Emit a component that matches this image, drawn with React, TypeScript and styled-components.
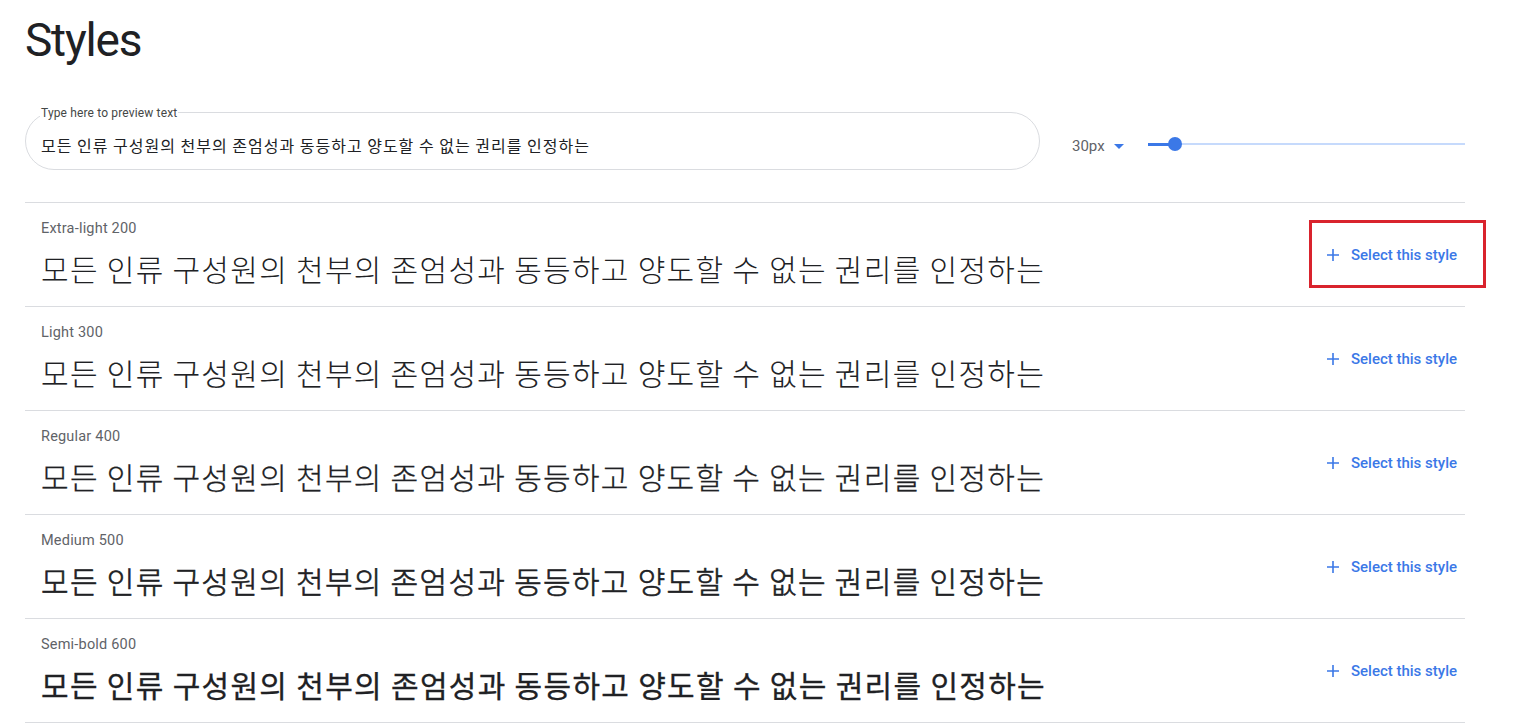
import React from 'react'
import styled, { createGlobalStyle } from 'styled-components';

const sample = '모든 인류 구성원의 천부의 존엄성과 동등하고 양도할 수 없는 권리를 인정하는';

// the installed CJK face is heavier than the reference serif, so each style gets its own weight and stroke
const styles = [
    { name: 'Extra-light 200', weight: 300, stroke: 0 },
    { name: 'Light 300', weight: 300, stroke: 0.15 },
    { name: 'Regular 400', weight: 300, stroke: 0.3 },
    { name: 'Medium 500', weight: 300, stroke: 0.6 },
    { name: 'Semi-bold 600', weight: 400, stroke: 0.3 },
];

export default function App() {
    return (
        <>
            <GlobalStyle />
            <Page>
                <Title>Styles</Title>
                <Toolbar>
                    <PreviewField>
                        <FieldLabel>Type here to preview text</FieldLabel>
                        <PreviewInput defaultValue={sample} />
                    </PreviewField>
                    <SizeSelect>
                        30px
                        <svg width="10" height="5" viewBox="0 0 10 5"><path d="M0 0h10L5 5z" fill="#3b78e7" /></svg>
                    </SizeSelect>
                    <Slider>
                        <SliderActive />
                        <SliderThumb />
                    </Slider>
                </Toolbar>
                <StyleList>
                    {styles.map((style, i) => (
                        <StyleRow key={style.name}>
                            <StyleText>
                                <StyleName>{style.name}</StyleName>
                                <Sample weight={style.weight} stroke={style.stroke}>{sample}</Sample>
                            </StyleText>
                            <SelectButton>
                                <svg width="12" height="12" viewBox="0 0 12 12">
                                    <path d="M6 0v12M0 6h12" stroke="#3b78e7" strokeWidth="1.6" />
                                </svg>
                                Select this style
                                {i === 0 && <Highlight />}
                            </SelectButton>
                        </StyleRow>
                    ))}
                </StyleList>
            </Page>
        </>
    )
}

const GlobalStyle = createGlobalStyle`
    body {
        margin: 0;
        background: #fff;
        font-family: Roboto, "Noto Sans CJK KR", sans-serif;
    }
`;

const Page = styled('div')(() => {
    return {
        padding: '14px 56px 0 25px',
    }
});

const Title = styled('h1')(() => {
    return {
        margin: 0,
        fontFamily: 'Roboto, sans-serif',
        fontWeight: 400,
        fontSize: 46,
        lineHeight: '52px',
        letterSpacing: -1.2,
        color: '#202124',
    }
});

const Toolbar = styled('div')(() => {
    return {
        display: 'flex',
        alignItems: 'center',
        marginTop: 46,
        paddingBottom: 32,
        borderBottom: '1px solid #dadce0',
    }
});

const PreviewField = styled('div')(() => {
    return {
        position: 'relative',
        width: 1015,
        height: 58,
        boxSizing: 'border-box',
        border: '1px solid #dadce0',
        borderRadius: 29,
        display: 'flex',
        alignItems: 'center',
        padding: '8px 16px 0 15px',
    }
});

const FieldLabel = styled('span')(() => {
    return {
        position: 'absolute',
        left: 14,
        top: -7,
        padding: '0 1px',
        background: '#fff',
        fontFamily: 'Roboto, sans-serif',
        fontSize: 12,
        lineHeight: '14px',
        color: '#444746',
        letterSpacing: 0.15,
    }
});

const PreviewInput = styled('input')(() => {
    return {
        flex: 1,
        border: 'none',
        outline: 'none',
        padding: 0,
        fontFamily: '"Noto Sans CJK KR", sans-serif',
        fontSize: 16,
        letterSpacing: 1,
        color: '#202124',
        background: 'transparent',
    }
});

const SizeSelect = styled('div')(() => {
    return {
        display: 'flex',
        alignItems: 'center',
        gap: 9,
        marginLeft: 32,
        paddingTop: 10,
        fontFamily: 'Roboto, sans-serif',
        fontSize: 15,
        color: '#5f6368',
    }
});

const Slider = styled('div')(() => {
    return {
        position: 'relative',
        flex: 1,
        height: 2,
        marginLeft: 24,
        marginTop: 6,
        background: '#c6dafc',
    }
});

const SliderActive = styled('div')(() => {
    return {
        width: 27,
        height: 3,
        marginTop: -0.5,
        background: '#3b78e7',
    }
});

const SliderThumb = styled('div')(() => {
    return {
        position: 'absolute',
        left: 20,
        top: -6,
        width: 14,
        height: 14,
        borderRadius: '50%',
        background: '#3b78e7',
    }
});

const StyleList = styled('div')(() => {
    return {
        display: 'flex',
        flexDirection: 'column',
    }
});

const StyleRow = styled('div')(() => {
    return {
        display: 'flex',
        alignItems: 'center',
        justifyContent: 'space-between',
        height: 104,
        boxSizing: 'border-box',
        borderBottom: '1px solid #dadce0',
        padding: '0 8px 0 16px',
    }
});

const StyleText = styled('div')(() => {
    return {
        display: 'flex',
        flexDirection: 'column',
    }
});

const StyleName = styled('div')(() => {
    return {
        fontFamily: 'Roboto, sans-serif',
        fontSize: 14.5,
        lineHeight: '18px',
        letterSpacing: 0.2,
        color: '#5f6368',
    }
});

const Sample = styled('div')<{ weight: number; stroke: number }>((props) => {
    return {
        marginTop: 8,
        fontFamily: '"Noto Sans CJK KR", sans-serif',
        fontWeight: props.weight,
        WebkitTextStroke: props.stroke ? `${props.stroke}px #202124` : undefined,
        fontSize: 30,
        letterSpacing: 1.3,
        lineHeight: '44px',
        color: '#202124',
        whiteSpace: 'nowrap',
    }
});

const SelectButton = styled('button')(() => {
    return {
        position: 'relative',
        display: 'flex',
        alignItems: 'center',
        gap: 12,
        height: 36,
        padding: '0 0 0 8px',
        border: 'none',
        background: 'transparent',
        fontFamily: 'Roboto, sans-serif',
        fontSize: 15,
        fontWeight: 500,
        color: '#3b78e7',
        cursor: 'pointer',
    }
});

const Highlight = styled('span')(() => {
    return {
        position: 'absolute',
        left: -10,
        right: -29,
        top: -17,
        bottom: -15,
        border: '3px solid #d9232d',
        pointerEvents: 'none',
    }
});
